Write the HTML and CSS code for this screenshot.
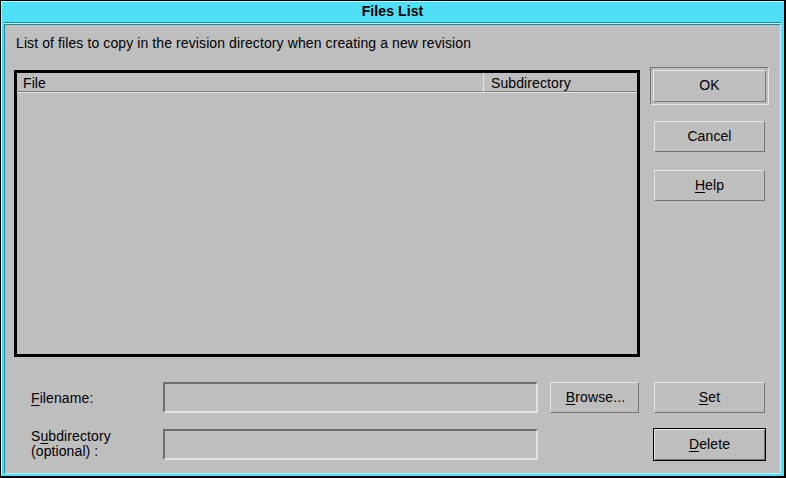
FILE: index.html
```html
<!DOCTYPE html>
<html>
  <head>
    <meta charset="utf-8">
    <title>Files List</title>
    <link rel="stylesheet" href="styles.css">
  </head>
  <body>
    <div class="window">
      <div class="titlebar">Files List</div>
      <div class="panel">
        <div class="top">
          <div class="left">
            <p class="intro">List of files to copy in the revision directory when creating a new revision</p>
            <div class="list">
              <div class="list-head">
                <div class="col-file">File</div>
                <div class="col-sub">Subdirectory</div>
              </div>
              <div class="list-body"></div>
            </div>
          </div>
          <div class="right">
            <div class="default-frame">
              <button class="btn btn-ok">OK</button>
            </div>
            <button class="btn btn-side btn-cancel">Cancel</button>
            <button class="btn btn-side btn-help"><u>H</u>elp</button>
          </div>
        </div>

        <div class="row row-file">
          <label class="label"><u>F</u>ilename:</label>
          <div class="field"></div>
          <button class="btn btn-browse"><u>B</u>rowse...</button>
          <button class="btn btn-side btn-set"><u>S</u>et</button>
        </div>
        <div class="row row-sub">
          <label class="label label-two">S<u>u</u>bdirectory<br>(optional) :</label>
          <div class="field"></div>
          <div class="spacer"></div>
          <button class="btn btn-delete"><u>D</u>elete</button>
        </div>
      </div>
    </div>
  </body>
</html>
```

FILE: styles.css
```css
* {
  margin: 0;
  padding: 0;
  box-sizing: border-box;
}

html,
body {
  width: 786px;
  height: 478px;
  overflow: hidden;
}

body {
  font-family: "Liberation Sans", Arial, sans-serif;
  font-size: 14px;
  line-height: 16px;
  letter-spacing: 0.1px;
  color: #000;
  background: #000;
}

.window {
  width: 786px;
  height: 478px;
  display: flex;
  flex-direction: column;
  background: #4fe0f8;
  border-top: 1px solid #000;
  border-left: 1px solid #000;
  border-right: 2px solid #000;
  border-bottom: 2px solid #000;
  padding: 0 3px 2px 3px;
  box-shadow: inset 1px 1px 0 #b6f5ff;
}

.titlebar {
  height: 23px;
  padding-top: 1px;
  text-align: center;
  font-weight: bold;
  border-top: 1px solid #b6f5ff;
  border-bottom: 1px solid #b6f5ff;
  box-shadow: inset 0 -1px 0 #1c8c9e;
}

.panel {
  flex: 1;
  background: #bebebe;
  border-top: 1px solid #1c8c9e;
  border-left: 1px solid #1c8c9e;
  border-right: 1px solid #b6f5ff;
  border-bottom: 1px solid #b6f5ff;
  padding: 10px 10px 0 9px;
}

.top {
  display: flex;
}

.left {
  width: 626px;
}

.intro {
  height: 16px;
  padding-left: 2px;
  margin-bottom: 19px;
  white-space: nowrap;
}

.list {
  height: 287px;
  border: 3px solid #000;
}

.list-head {
  display: grid;
  grid-template-columns: 466px 1fr;
  height: 20px;
  border-bottom: 1px solid #e6e6e6;
  box-shadow: inset 0 -1px 0 #7a7a7a;
}

.col-file {
  padding: 2px 0 0 6px;
}

.col-sub {
  padding: 2px 0 0 7px;
  border-left: 1px solid #e6e6e6;
}

.right {
  width: 119px;
  margin-left: 10px;
  padding-top: 32px;
  display: flex;
  flex-direction: column;
  align-items: center;
}

.btn {
  font-family: inherit;
  font-size: 14px;
  line-height: 16px;
  letter-spacing: 0.1px;
  color: #000;
  background: #bebebe;
  border: 1px solid;
  border-color: #e6e6e6 #747474 #747474 #e6e6e6;
  text-align: center;
  padding-bottom: 2px;
}

.btn u,
.label u {
  text-decoration: underline;
  text-underline-offset: 2px;
}

.default-frame {
  width: 119px;
  height: 38px;
  padding: 2px;
  border: 1px solid;
  border-color: #747474 #e6e6e6 #e6e6e6 #747474;
}

.btn-ok {
  width: 113px;
  height: 32px;
}

.btn-side {
  width: 111px;
  height: 31px;
}

.btn-cancel {
  margin-top: 16px;
}

.btn-help {
  margin-top: 18px;
}

.row {
  display: flex;
  align-items: center;
}

.row-file {
  margin-top: 25px;
  height: 31px;
}

.row-sub {
  margin-top: 15px;
  height: 33px;
}

.label {
  width: 149px;
  padding-left: 17px;
}

.label-two {
  line-height: 15px;
  margin-top: -1px;
}

.field {
  width: 375px;
  height: 31px;
  border: 2px solid;
  border-color: #6e6e6e #e2e2e2 #e2e2e2 #6e6e6e;
}

.btn-browse {
  width: 89px;
  height: 31px;
  margin-left: 12px;
  padding-left: 2px;
}

.btn-set {
  margin-left: 15px;
}

.spacer {
  width: 115px;
}

.btn-delete {
  width: 113px;
  height: 33px;
  border: 1px solid #000;
  box-shadow: inset 1px 1px 0 #e6e6e6, inset -1px -1px 0 #747474;
}
```
